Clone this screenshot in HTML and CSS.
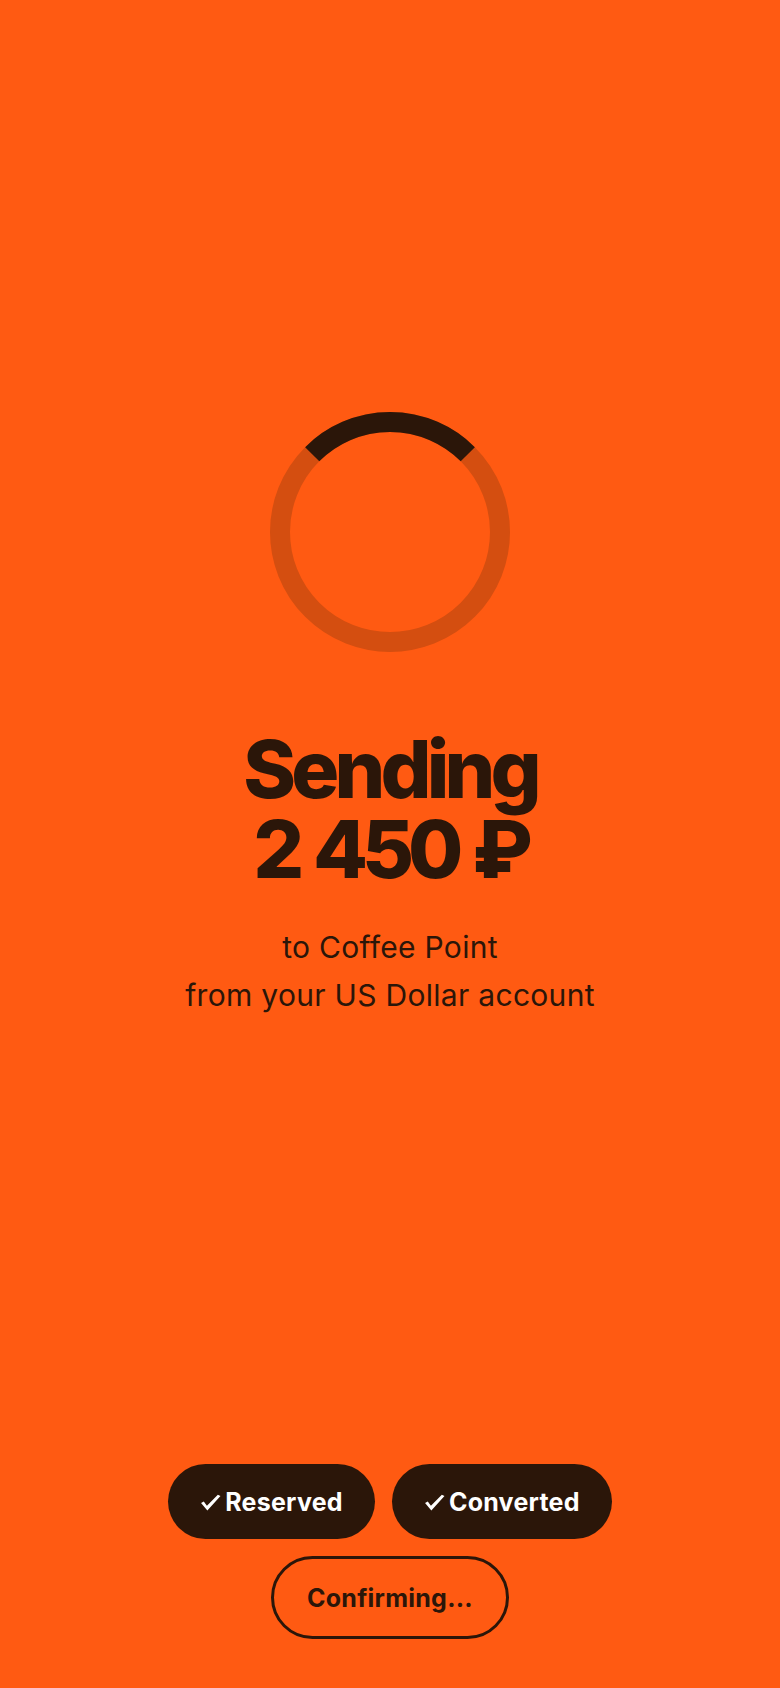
FILE: index.html
```html
<!DOCTYPE html>
<html>
<head>
    <title>Sending</title>
    <link rel="stylesheet" href="styles.css">
</head>
<body>
    <div class="screen">
        <svg class="spinner" width="240" height="240" viewBox="0 0 240 240">
            <circle cx="120" cy="120" r="110" fill="none" stroke="#d44e10" stroke-width="20"/>
            <path d="M42.22 42.22 A110 110 0 0 1 197.78 42.22" fill="none" stroke="#2b1609" stroke-width="20"/>
        </svg>

        <h1 class="title">Sending<br><span class="amount">2 450 ₽</span></h1>
        <p class="details">to Coffee Point<br>from your US Dollar account</p>

        <div class="steps">
            <div class="step-row">
                <span class="step done">
                    <svg class="check" width="21" height="17" viewBox="0 0 20 16"><path d="M1 8.5 L3.6 7 L6.6 11 L17 0.5 L19.5 1.8 L7 15.5 Z" fill="#fff"/></svg>Reserved
                </span>
                <span class="step done">
                    <svg class="check" width="21" height="17" viewBox="0 0 20 16"><path d="M1 8.5 L3.6 7 L6.6 11 L17 0.5 L19.5 1.8 L7 15.5 Z" fill="#fff"/></svg>Converted
                </span>
            </div>
            <span class="step current">Confirming...</span>
        </div>
    </div>
</body>
</html>
```

FILE: styles.css
```css
body { margin: 0; background: #ff5a12; font-family: Inter, "Noto Sans", sans-serif; color: #2b1609; }
.screen { display: flex; flex-direction: column; align-items: center; height: 100vh; box-sizing: border-box; padding: 412px 0 49px; }
.spinner { display: block; }
.title { margin: 77px 0 0; font-size: 80px; line-height: 80px; font-weight: 800; letter-spacing: -0.06em; text-align: center; }
.amount { letter-spacing: -0.075em; word-spacing: 3px; }
.details { margin: 34px 0 0; font-size: 30px; line-height: 48px; text-align: center; letter-spacing: 0.01em; }
.steps { margin-top: auto; display: flex; flex-direction: column; align-items: center; gap: 17px; }
.step-row { display: flex; gap: 17px; }
.step { display: flex; align-items: center; justify-content: center; border-radius: 999px; font-size: 25px; font-weight: 700; box-sizing: border-box; letter-spacing: 0.01em; }
.step.done { background: #2b1609; color: #fff; height: 75px; padding: 0 32px; }
.step.current { border: 3px solid #2b1609; height: 83px; padding: 0 33px; }
.check { display: block; margin: 1px 4px 0 0; }
```
